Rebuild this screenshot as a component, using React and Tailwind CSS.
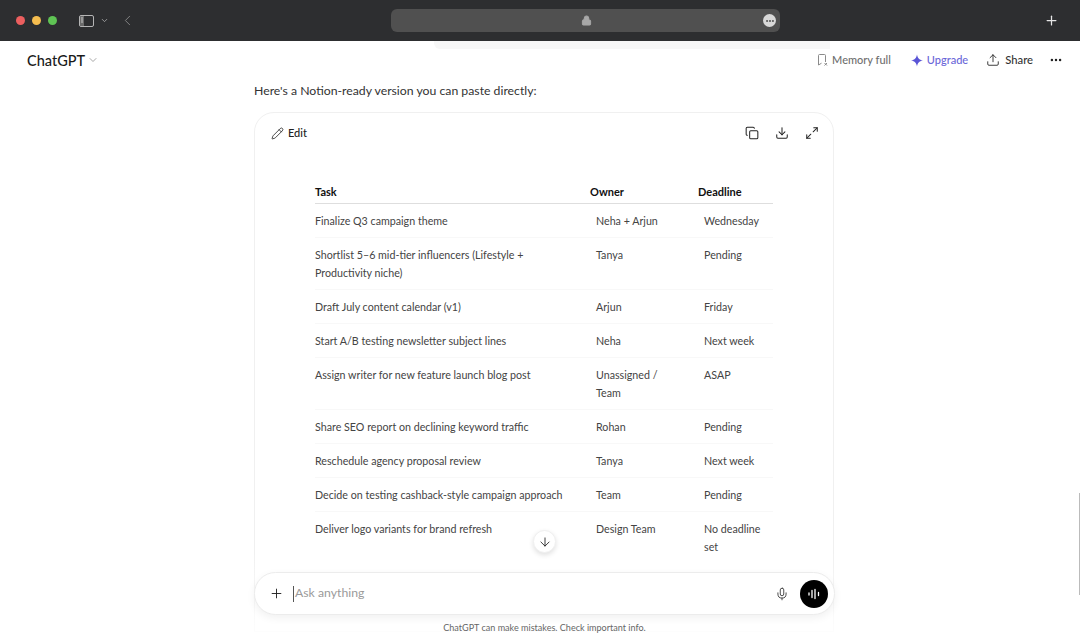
import React from "react";
import { ArrowDown, ChevronDown, ChevronLeft, Copy, Download, Ellipsis, Lock, Maximize2, Mic, Pencil, Plus, Upload } from "lucide-react";

const ROWS = [
    { task: "Finalize Q3 campaign theme", owner: "Neha + Arjun", deadline: "Wednesday" },
    { task: "Shortlist 5–6 mid-tier influencers (Lifestyle + Productivity niche)", owner: "Tanya", deadline: "Pending" },
    { task: "Draft July content calendar (v1)", owner: "Arjun", deadline: "Friday" },
    { task: "Start A/B testing newsletter subject lines", owner: "Neha", deadline: "Next week" },
    { task: "Assign writer for new feature launch blog post", owner: "Unassigned / Team", deadline: "ASAP" },
    { task: "Share SEO report on declining keyword traffic", owner: "Rohan", deadline: "Pending" },
    { task: "Reschedule agency proposal review", owner: "Tanya", deadline: "Next week" },
    { task: "Decide on testing cashback-style campaign approach", owner: "Team", deadline: "Pending" },
    { task: "Deliver logo variants for brand refresh", owner: "Design Team", deadline: "No deadline set" },
];

function BrowserBar() {
    return (
        <div className="flex h-[41px] shrink-0 items-center bg-[#2d2e30] pl-4 pr-[21px]">
            <div className="flex items-center gap-[7px]">
                <span className="h-[9px] w-[9px] rounded-full bg-[#ec5f5f]" />
                <span className="h-[9px] w-[9px] rounded-full bg-[#f5bd4f]" />
                <span className="h-[9px] w-[9px] rounded-full bg-[#5fc454]" />
            </div>
            <svg width="15" height="12" viewBox="0 0 15 12" fill="none" className="ml-[22px]">
                <rect x="0.5" y="0.5" width="14" height="11" rx="1.5" stroke="#b5b5b5" />
                <rect x="1" y="1" width="4" height="10" fill="#6b6b6b" />
                <path d="M2 3h2M2 5h2M2 7h2" stroke="#c8c8c8" />
            </svg>
            <ChevronDown size={9} strokeWidth={2} className="ml-[6px] text-[#b5b5b5]" />
            <ChevronLeft size={17} strokeWidth={1.25} className="ml-[10px] text-[#8a8a8a]" />
            <div className="ml-[255px] flex h-[23px] w-[389px] items-center rounded-md bg-[#505050] pr-[4px]">
                <Lock size={11} fill="#a8a8a8" strokeWidth={2} className="ml-[190px] text-[#a8a8a8]" />
                <span className="ml-auto flex h-[13px] w-[13px] items-center justify-center rounded-full bg-[#d8d8d8]">
                    <Ellipsis size={10} strokeWidth={3} className="text-[#505050]" />
                </span>
            </div>
            <Plus size={15} strokeWidth={2} className="ml-auto text-[#e6e6e6]" />
        </div>
    );
}

function TopBar() {
    return (
        <div className="flex h-[38px] shrink-0 items-center pl-[27px] pr-[17px]">
            <span className="pt-px text-[14.5px] font-medium text-[#1a1a1a]">ChatGPT</span>
            <ChevronDown size={12} strokeWidth={1.5} className="ml-[2px] text-[#8a8a8a]" />
            <div className="ml-auto flex items-center text-[11px] font-medium">
                <svg width="10" height="12" viewBox="0 0 10 12" fill="none" stroke="#8a8a8a" strokeWidth="1">
                    <path d="M7.5 8V1.5a1 1 0 0 0-1-1h-5a1 1 0 0 0-1 1v9.5l3-1.8" />
                    <path d="M6.5 9l2.5 2.5M9 9l-2.5 2.5" />
                </svg>
                <span className="ml-[4px] text-[#6f6f6f]">Memory full</span>
                <svg width="12" height="13" viewBox="0 0 12 13" className="ml-[20px]">
                    <path d="M6 0.5C6.6 4 8 5.7 12 6.5 8 7.3 6.6 9 6 12.5 5.4 9 4 7.3 0 6.5 4 5.7 5.4 4 6 0.5Z" fill="#5a55d6" />
                </svg>
                <span className="ml-[4px] text-[#6a66d8]">Upgrade</span>
                <Upload size={14} strokeWidth={1.5} className="ml-[18px] text-[#222]" />
                <span className="ml-[5px] text-[11.25px] text-[#333]">Share</span>
                <Ellipsis size={14} strokeWidth={2.25} className="ml-[16px] text-[#222]" />
            </div>
        </div>
    );
}

function TaskTable() {
    return (
        <div className="mx-[60px] mt-[41px] text-[10.7px] leading-[18px] text-[#444]">
            <div className="grid grid-cols-[275px_108px_76px] border-b border-[#dedede] pb-[2px] text-[11px] font-bold text-[#111]">
                <span>Task</span>
                <span>Owner</span>
                <span>Deadline</span>
            </div>
            {ROWS.map((row) => (
                <div key={row.task} className="grid grid-cols-[281px_108px_70px] border-b border-[#f8f8f8] pb-[7px] pt-[8px] last:border-b-0">
                    <span className="pr-[24px]">{row.task}</span>
                    <span className="pr-[30px]">{row.owner}</span>
                    <span className="pr-[4px]">{row.deadline}</span>
                </div>
            ))}
        </div>
    );
}

function Composer() {
    return (
        <div className="absolute bottom-[21px] left-[254px] flex h-[43px] w-[581px] items-center rounded-[22px] border border-[#ececec] bg-white pl-[14px] pr-[6px] shadow-[0_3px_8px_rgba(0,0,0,0.06)]">
            <Plus size={15} strokeWidth={1.5} className="text-[#222]" />
            <span className="ml-[9px] h-[16px] w-px bg-[#555]" />
            <span className="ml-px text-[12.25px] text-[#9a9a9a]">Ask anything</span>
            <Mic size={14} strokeWidth={1.5} className="ml-auto text-[#333]" />
            <span className="ml-[11px] flex h-[28px] w-[28px] items-center justify-center rounded-full bg-black">
                <svg width="12" height="12" viewBox="0 0 12 12" stroke="#fff" strokeWidth="1.3" strokeLinecap="round">
                    <path d="M1 5v2M4 2.5v7M7 1.5v9M10.5 4.5v3" />
                </svg>
            </span>
        </div>
    );
}

export default function App() {
    return (
        <div className="relative flex h-[636px] w-[1080px] flex-col overflow-hidden bg-white font-['Lato','Open_Sans',sans-serif]">
            <BrowserBar />
            <div className="absolute left-[434px] top-[41px] h-[8px] w-[396px] rounded-bl-md bg-[#f7f7f7]" />
            <TopBar />
            <p className="ml-[254px] mt-[2px] text-[12.25px] leading-[20px] text-[#333]">Here's a Notion-ready version you can paste directly:</p>
            <div className="ml-[254px] mt-[11px] h-[520px] w-[580px] shrink-0 rounded-t-[20px] border border-[#f0f0f0]">
                <div className="flex items-center justify-between pl-[16px] pr-[14px] pt-[12px]">
                    <div className="flex items-center gap-[4px] text-[11px] font-medium text-[#222]">
                        <Pencil size={13} strokeWidth={1.5} />
                        <span>Edit</span>
                    </div>
                    <div className="flex items-center gap-[16px] text-[#222]">
                        <Copy size={14} strokeWidth={1.75} />
                        <Download size={14} strokeWidth={1.75} />
                        <Maximize2 size={14} strokeWidth={1.75} />
                    </div>
                </div>
                <TaskTable />
            </div>
            <div className="absolute inset-x-0 bottom-0 h-[85px] bg-gradient-to-b from-white/0 to-white/90" />
            <button className="absolute left-[533px] top-[530px] flex h-[23px] w-[23px] items-center justify-center rounded-full border border-[#f0f0f0] bg-white shadow-[0_2px_5px_rgba(0,0,0,0.12)]">
                <ArrowDown size={14} strokeWidth={1.5} className="text-[#222]" />
            </button>
            <Composer />
            <p className="absolute inset-x-0 bottom-[1px] ml-[9px] text-center text-[9.05px] leading-[14px] text-[#666]">ChatGPT can make mistakes. Check important info.</p>
            <div className="absolute right-0 top-[493px] h-[102px] w-[1.5px] bg-[#bbb]" />
        </div>
    );
}
